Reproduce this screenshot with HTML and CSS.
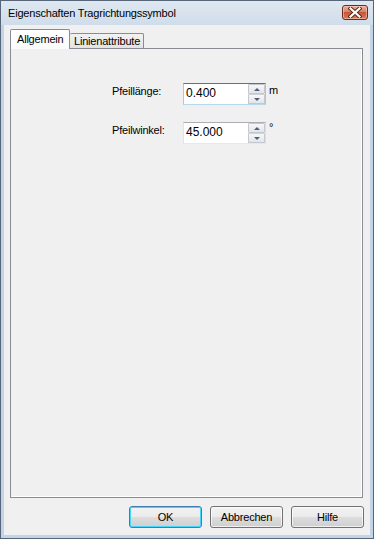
FILE: index.html
```html
<!DOCTYPE html>
<html>
<head>
<meta charset="utf-8">
<link rel="stylesheet" href="styles.css">
</head>
<body>
<div class="window">
  <div class="titlebar">
    <span class="title">Eigenschaften Tragrichtungssymbol</span>
    <div class="close">
      <svg width="14" height="11" viewBox="0 0 14 11">
        <path d="M2.5 1.5 L7 5.5 L11.5 1.5 M2.5 9.5 L7 5.5 L11.5 9.5" stroke="#5a2418" stroke-width="4" stroke-linecap="square" fill="none"/>
        <path d="M2.5 1.5 L7 5.5 L11.5 1.5 M2.5 9.5 L7 5.5 L11.5 9.5" stroke="#ffffff" stroke-width="2.2" stroke-linecap="square" fill="none"/>
      </svg>
    </div>
  </div>
  <div class="client">
    <div class="tabs">
      <div class="tab active">Allgemein</div>
      <div class="tab">Linienattribute</div>
    </div>
    <div class="panel">
      <div class="form">
        <div class="row">
          <span class="label">Pfeillänge:</span>
          <div class="spinbox focus">
            <span class="value">0.400</span>
            <div class="spin">
              <span class="sbtn"><i class="up"></i></span>
              <span class="sbtn"><i class="down"></i></span>
            </div>
          </div>
          <span class="unit">m</span>
        </div>
        <div class="row">
          <span class="label">Pfeilwinkel:</span>
          <div class="spinbox">
            <span class="value">45.000</span>
            <div class="spin">
              <span class="sbtn"><i class="up"></i></span>
              <span class="sbtn"><i class="down"></i></span>
            </div>
          </div>
          <span class="unit deg">°</span>
        </div>
      </div>
    </div>
    <div class="buttons">
      <div class="btn default">OK</div>
      <div class="btn">Abbrechen</div>
      <div class="btn">Hilfe</div>
    </div>
  </div>
</div>
</body>
</html>
```

FILE: styles.css
```css
* { box-sizing: border-box; }
html, body { margin: 0; padding: 0; background: #ffffff; }
body {
  font-family: "Liberation Sans", Arial, sans-serif;
  font-size: 11px;
  letter-spacing: -0.2px;
  color: #000;
}
.window {
  width: 374px;
  height: 539px;
  border: 1px solid #56657a;
  background: #c3d4e6;
  display: flex;
  flex-direction: column;
  padding: 0 3px 3px 3px;
}
.titlebar {
  height: 25px;
  display: flex;
  align-items: flex-start;
  justify-content: space-between;
  background: linear-gradient(#dfe8f1, #cfdcea);
  margin: 0 -3px;
  padding: 0 5px 0 7px;
}
.title {
  font-size: 11px;
  line-height: 24px;
  color: #000;
}
.close {
  margin-top: 4px;
  width: 26px;
  height: 15px;
  border: 1px solid #6b2a1e;
  border-radius: 3px;
  background: linear-gradient(#e9ae9c 0%, #d98268 45%, #c7553a 50%, #d57a5c 100%);
  display: flex;
  align-items: center;
  justify-content: center;
  box-shadow: inset 0 0 0 1px rgba(255,220,200,0.5);
}
.client {
  flex: 1;
  background: #f0f0f0;
  display: flex;
  flex-direction: column;
  padding: 4px 7px 7px 6px;
}
.tabs {
  height: 19px;
  display: flex;
  align-items: flex-end;
  position: relative;
  z-index: 1;
}
.tab {
  height: 15px;
  width: 74px;
  border: 1px solid #898c95;
  border-bottom: none;
  background: linear-gradient(#f2f2f2, #e3e3e3);
  line-height: 14px;
  padding-left: 4px;
  border-radius: 2px 2px 0 0;
  border-left: none;
}
.tab.active {
  height: 20px;
  width: 60px;
  margin-bottom: -1px;
  background: #ffffff;
  border-left: 1px solid #898c95;
  padding-left: 6px;
  line-height: 19px;
  background: linear-gradient(#ffffff, #fbfbfb);
}
.panel {
  height: 450px;
  border: 1px solid #898c95;
  background: #f0f0f0;
  box-shadow: inset -1px -1px 0 #ffffff;
  padding: 34px 0 0 101px;
}
.form {
  display: flex;
  flex-direction: column;
  gap: 17px;
}
.row {
  display: flex;
  align-items: flex-start;
  height: 22px;
}
.label {
  width: 71px;
  line-height: 16px;
  margin-top: 0;
}
.spinbox {
  width: 83px;
  height: 22px;
  display: flex;
  border: 1px solid;
  border-color: #abadb3 #dbdfe6 #e3e9ef #e2e3ea;
  background: #fff;
}
.spinbox.focus {
  border-color: #3d7bad #a4c9e3 #b7d9ed #a4c9e3;
}
.value {
  flex: 1;
  padding-left: 2px;
  line-height: 19px;
  font-size: 12px;
  letter-spacing: 0;
}
.spin {
  width: 18px;
  display: flex;
  flex-direction: column;
  padding: 0 0 0 1px;
}
.sbtn {
  flex: 1;
  border: 1px solid #c3c8d0;
  background: linear-gradient(#f7f7f7, #e4e5e8);
  display: flex;
  align-items: center;
  justify-content: center;
  border-radius: 1px;
}
.sbtn + .sbtn { border-top-color: #d0d4da; }
.sbtn i {
  width: 0;
  height: 0;
  border-left: 3px solid transparent;
  border-right: 3px solid transparent;
}
.sbtn i.up { border-bottom: 3px solid #4c607a; }
.sbtn i.down { border-top: 3px solid #4c607a; }
.unit {
  margin-left: 3px;
  line-height: 14px;
}
.unit.deg { line-height: 10px; }
.buttons {
  margin-top: 8px;
  margin-right: -1px;
  display: flex;
  justify-content: flex-end;
  gap: 8px;
}
.btn {
  width: 73px;
  height: 22px;
  border: 1px solid #707070;
  border-radius: 3px;
  background: linear-gradient(#f2f2f2 0%, #ebebeb 50%, #dddddd 50%, #cfcfcf 100%);
  box-shadow: inset 0 0 0 1px rgba(255,255,255,0.7);
  text-align: center;
  line-height: 20px;
}
.btn.default {
  border-color: #3c7fb1;
  box-shadow: inset 0 0 0 1px #48d5fd;
}
```
